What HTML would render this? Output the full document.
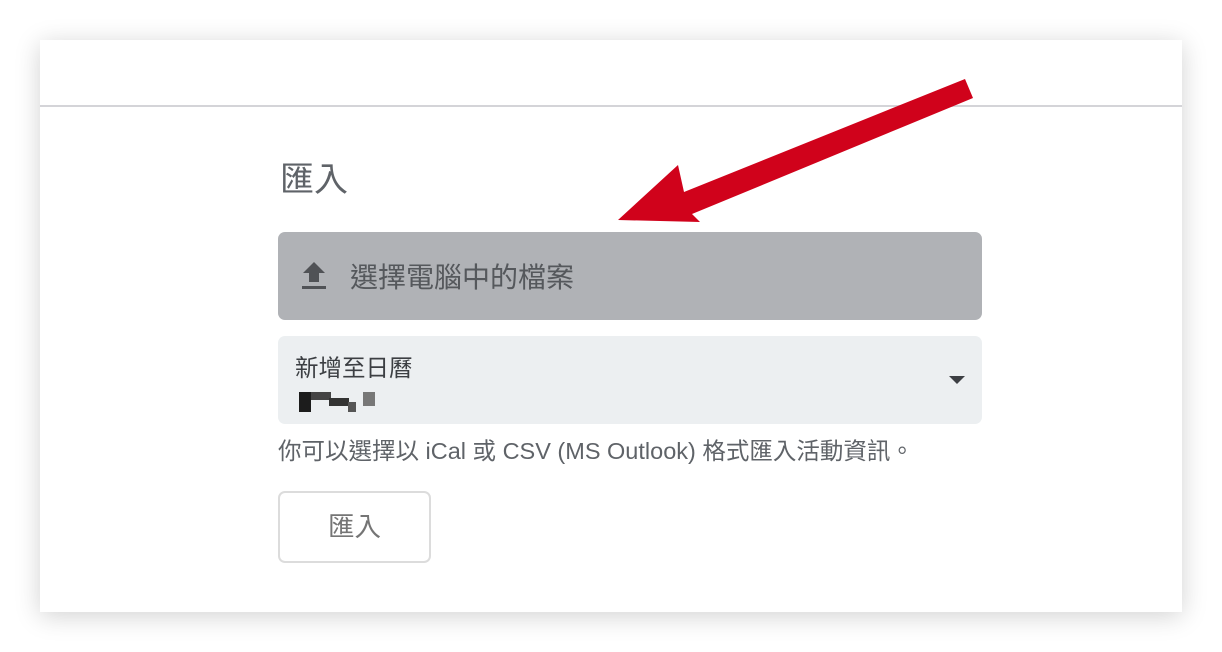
<!DOCTYPE html>
<html><head><meta charset="utf-8"><style>
body{margin:0;width:1222px;height:652px;background:#fff;position:relative;overflow:hidden;font-family:"Liberation Sans","Noto Sans CJK TC",sans-serif;}
.card{position:absolute;left:40px;top:40px;width:1142px;height:572px;background:#fff;box-shadow:0 4px 24px rgba(0,0,0,0.18);}
.line{position:absolute;left:40px;top:105px;width:1142px;height:2px;background:#d4d4d8;}
.t{position:absolute;color:#5f6368;white-space:nowrap;line-height:1;}
.btn{position:absolute;left:278px;top:232px;width:704px;height:88px;background:#b0b2b6;border-radius:7px;}
.sel{position:absolute;left:278px;top:336px;width:704px;height:88px;background:#eceff1;border-radius:7px;}
.imp{position:absolute;left:278px;top:491px;width:153px;height:72px;border:2px solid #dcdcdc;border-radius:7px;box-sizing:border-box;}
</style></head><body>
<div class="card"></div>
<div class="line"></div>
<div class="t" style="left:280px;top:163px;font-size:34px;">匯入</div>
<div class="btn"></div>
<svg style="position:absolute;left:300px;top:260px" width="28" height="32" viewBox="0 0 28 32"><path d="M14 2 L3 13 H9 V22 H19 V13 H25 Z" fill="#505256"/><rect x="2" y="26" width="24" height="3" fill="#505256"/></svg>
<div class="t" style="left:350px;top:264px;font-size:28px;color:#55585c;">選擇電腦中的檔案</div>
<div class="sel"></div>
<svg style="position:absolute;left:949px;top:376px" width="16" height="9"><path d="M0 0 H16 L8 8 Z" fill="#3c3f43"/></svg>
<div class="t" style="left:295px;top:357px;font-size:23.5px;color:#3c3f43;">新增至日曆</div>
<div style="position:absolute;left:299px;top:392px;width:12px;height:20px;background:#1c1c1c"></div>
<div style="position:absolute;left:311px;top:392px;width:20px;height:8px;background:#444"></div>
<div style="position:absolute;left:329px;top:398px;width:20px;height:8px;background:#333"></div>
<div style="position:absolute;left:348px;top:402px;width:8px;height:10px;background:#555"></div>
<div style="position:absolute;left:363px;top:392px;width:12px;height:14px;background:#777"></div>
<div class="t" style="left:278px;top:440px;font-size:23.5px;">你可以選擇以 iCal 或 CSV (MS Outlook) 格式匯入活動資訊。</div>
<div class="imp"></div>
<div class="t" style="left:328px;top:514px;font-size:26.5px;color:#757575;">匯入</div>
<svg style="position:absolute;left:0;top:0" width="1222" height="652"><polygon points="965,79 973,98 692,214 700,222 618,220 678,165 684,192" fill="#d0021b"/></svg>
</body></html>
